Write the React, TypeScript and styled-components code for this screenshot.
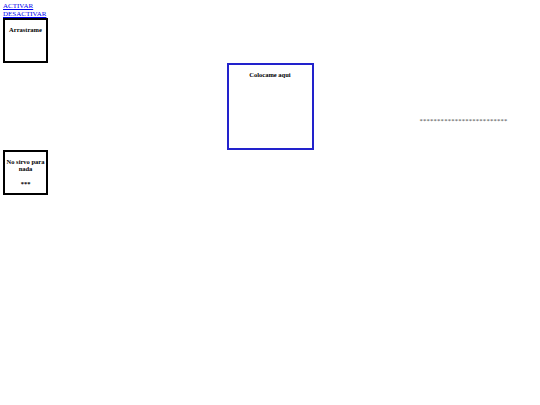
import * as React from "react"
import styled, { createGlobalStyle } from "styled-components"

const Global = createGlobalStyle`
body {
  margin: 3px;
  font-family: "Liberation Serif", "Times New Roman", serif;
  font-size: 7px;
  line-height: 8px;
  background: #fff;
  color: #000;
}
`

const Links = styled.nav`
display: flex;
flex-direction: column;
`

const Link = styled.a`
color: #0000ee;
text-decoration: underline;
font-size: 7px;
line-height: 7.5px;
width: fit-content;
`

const Box = styled.div<{ $size: number; $color?: string }>`
width: ${p => p.$size}px;
height: ${p => p.$size}px;
border: 2px solid ${p => p.$color || "#000"};
box-sizing: border-box;
text-align: center;
padding-top: 5.5px;
font-weight: bold;
font-size: 6.5px;
line-height: 7.5px;
`

const Title = styled.div`
padding: 0 1px;
`

const Extra = styled.div`
margin-top: 7.5px;
`

const Row = styled.div`
display: grid;
grid-template-columns: 1fr auto 1fr;
`

const Stars = styled.div`
align-self: start;
margin-top: 54px;
padding-left: 106px;
color: #444;
font-size: 6.5px;
letter-spacing: 0.27px;
white-space: nowrap;
`

const App: React.FC<{}> = () => {
    return (
        <>
            <Global />
            <Links>
                <Link href="#">ACTIVAR</Link>
                <Link href="#">DESACTIVAR</Link>
            </Links>
            <Box $size={45}>
                <Title>Arrastrame</Title>
            </Box>
            <Row>
                <div />
                <Box $size={87} $color="#2222cc">
                    <Title>Colocame aqui</Title>
                </Box>
                <Stars>*************************</Stars>
            </Row>
            <Box $size={45}>
                <Title>No sirvo para nada</Title>
                <Extra>***</Extra>
            </Box>
        </>
    );
}
export default App;
